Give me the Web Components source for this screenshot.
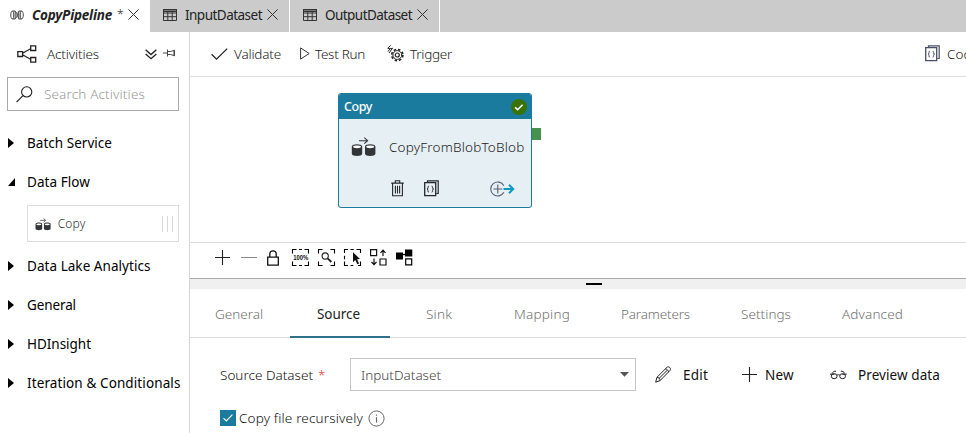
<!DOCTYPE html>
<html lang="en">
<head>
<meta charset="utf-8">
<title>CopyPipeline</title>
<style>
html,body{margin:0;height:100%;overflow:hidden;background:#fff}
body{font:300 13.5px/20px "Noto Sans","Open Sans",sans-serif;color:#222}
</style>
</head>
<body>
<pipeline-app></pipeline-app>
<script>
/* Text label with a set advance width: the letter spacing takes up the difference. */
class FitText extends HTMLElement{
  connectedCallback(){
    this.attachShadow({mode:'open'}).innerHTML=`<style>:host{display:block;flex:none;white-space:pre;line-height:20px}span{display:inline-block}</style><span><slot></slot></span>`;
    const w=+this.getAttribute('w'),s=this.shadowRoot.querySelector('span');
    if(w){
      this.style.width=w+'px';
      const n=this.textContent.length;
      s.style.letterSpacing=((w-s.getBoundingClientRect().width)/n).toFixed(3)+'px';
    }
  }
}

const corners='<path d="M.5 4.5v-4h4M7 .5h3M12.5.5h4v4M.5 12.5v4h4M7 16.5h3M12.5 16.5h4v-4" fill="none" stroke="#000" stroke-width="1.1"/>';
const sheet=c=>`<path d="M3.5 2.7V.8h10.7v12.7h-2" fill="none" stroke="${c}" stroke-width="1.2"/><path d="M.7 2.7h11v13H.7z" fill="none" stroke="${c}" stroke-width="1.3"/><path d="M5 6.2c-1.2 0-1 .7-1 1.6 0 .8-.2 1.2-1 1.3.8.1 1 .5 1 1.3 0 .9-.2 1.7 1 1.7M7.6 6.2c1.2 0 1 .7 1 1.6 0 .8.2 1.2 1 1.3-.8.1-1 .5-1 1.3 0 .9.2 1.7-1 1.7" fill="none" stroke="${c}" stroke-width="1"/>`;
const ICONS={
  pipe:[14,10,'<g fill="none" stroke="#333" stroke-width=".9"><path d="M2.6 1h2.6v8H2.6C.1 9 .1 1 2.6 1zM2.8 1c1.3 1 1.3 7 0 8M11.4 1H8.8v8h2.6c2.5 0 2.5-8 0-8zM11.2 1c-1.3 1-1.3 7 0 8M5.2 1.6c2.4.6 2.4 6.2 0 6.8M8.8 1.6C7.4 2.4 7.4 7.6 8.8 8.4"/></g>'],
  close:[11,11,'<path d="M.4.4l10.2 10.2M10.6.4L.4 10.6" stroke="#333" stroke-width="1" fill="none"/>'],
  table:[14,12,'<path d="M.5.5h13v11H.5zM.5 4h13M.5 7.7h13M4.8 3v8.5M9.2 3v8.5" fill="none" stroke="#333"/><path d="M0 0h14v3H0z" fill="#333"/><path d="M1 1.5h12" stroke="#999" stroke-width=".7"/>'],
  nodes:[20,18,'<path d="M6 8l8-4.5M6 10l8 4.5" stroke="#222" fill="none" stroke-width="1.1"/><g fill="#fff" stroke="#222" stroke-width="1.3"><path d="M.8 6.7h4.8v4.8H.8zM13.7.8h5v4.7h-5zM13.7 12.5h5v4.7h-5z"/></g>'],
  chevrons:[12,11,'<path d="M.6.8L6 5.5 11.4.8M.6 5L6 9.7 11.4 5" stroke="#222" stroke-width="1.35" fill="none"/>'],
  pin:[12,8,'<path d="M0 4h4.4M4.5.5v7M4.5 2.5h3l3.5-1v5l-3.5-1h-3M11.4.8v6.4" fill="none" stroke="#333" stroke-width=".9"/>'],
  search:[17,17,'<circle cx="10.7" cy="5.9" r="5.1" fill="none" stroke="#222" stroke-width="1.1"/><path d="M7 9.6L.5 16.2" stroke="#222" stroke-width="1.2"/>'],
  right:[6,10,'<path d="M0 0l6 5-6 5z" fill="#000"/>'],
  down:[7,8,'<path d="M7 0v8H0z" fill="#000"/>'],
  copy:[26,20,'<g fill="#333638"><path d="M.8 9.6v7.2c0 3 10.4 3 10.4 0V9.6c0-3.2-10.4-3.2-10.4 0zM14 9.6v7.2c0 3 10.4 3 10.4 0V9.6c0-3.2-10.4-3.2-10.4 0z"/></g><g fill="#fff"><ellipse cx="6" cy="9.8" rx="4" ry="1.4"/><ellipse cx="19.2" cy="9.8" rx="4" ry="1.4"/></g><path d="M8 3.7h8.5M13.3.7l3.3 3-3.3 3" fill="none" stroke="#333638" stroke-width="1.1"/>'],
  grip:[12,16,'<path d="M.5 0v16M5.5 0v16M10.5 0v16" stroke="#d8d8d8"/>'],
  check:[17,12,'<path d="M.6 6.2l4.9 5L16.2.6" fill="none" stroke="#222" stroke-width="1.3"/>'],
  play:[10,13,'<path d="M.6.9v11.2L9.2 6.5z" fill="none" stroke="#333"/>'],
  trigger:[17,17,'<path d="M3.7.3L.8 3.3l2.2.5L1 6.5M3 3.8l2.6-.6L2 8" fill="none" stroke="#222" stroke-width="1"/><circle cx="10.3" cy="10" r="5.6" fill="none" stroke="#222" stroke-width="1.6" stroke-dasharray="2.5 1.9"/><circle cx="10.3" cy="10" r="4.4" fill="none" stroke="#222"/><circle cx="10.3" cy="10" r="2" fill="none" stroke="#222" stroke-width="1.2"/>'],
  code:[15,17,sheet('#22282b')],
  code2:[15,17,sheet('#4b4f66')],
  trash:[13,17,'<path d="M4.3 2.7V.8h4.4v1.9M.2 3.1h12.6M1.6 3.5v12.3h9.8V3.5M4.4 5.8v7.8M6.5 5.8v7.8M8.6 5.8v7.8" fill="none" stroke="#22282b" stroke-width="1.1"/>'],
  next:[25,16,'<path d="M13.9 4.7A7 7 0 1 0 13.9 11.3" fill="none" stroke="#555d70" stroke-width="1.1"/><path d="M3.5 8h8.8M7.8 3.5v9" stroke="#555d70" stroke-width="1.1"/><path d="M13.5 8h9M19 3.8L23.2 8 19 12.2" fill="none" stroke="#0c9ac4" stroke-width="2"/>'],
  ok:[16,16,'<circle cx="8" cy="8" r="8" fill="#397306"/><path d="M4.1 8.3l2.5 2.4 5-5" fill="none" stroke="#fff" stroke-width="1.6"/>'],
  plus:[15,15,'<path d="M0 7.5h15M7.5 0v15" stroke="#222" stroke-width="1.1"/>'],
  minus:[16,3,'<path d="M0 1.5h16" stroke="#888"/>'],
  lock:[12,16,'<path d="M.7 7.2h10.6v8H.7zM2.8 7V3.7C2.8-.2 9.2-.2 9.2 3.7V7" fill="none" stroke="#111" stroke-width="1.3"/>'],
  zoom100:[17,17,corners+'<text x="1.2" y="11" textLength="15" lengthAdjust="spacingAndGlyphs" font-family="Liberation Sans" font-weight="700" font-size="7" fill="#111">100%</text>'],
  zoomfit:[17,17,'<path d="M.5 4.5v-4h4M12.5.5h4v4M.5 12.5v4h4M12.5 16.5h4v-4" fill="none" stroke="#000" stroke-width="1.1"/><circle cx="7.2" cy="7" r="3.1" fill="none" stroke="#222" stroke-width="1.1"/><path d="M9.6 9.3l3.8 3.7" stroke="#222" stroke-width="1.8"/>'],
  select:[17,17,'<path d="M.5 4V.5H4M6.5.5h3.3M12.5.5h4V4M.5 6.8v3.4M.5 12.6v3.9H4M6.5 16.5h2.8M16.5 12.6v3.9H14" fill="none" stroke="#000" stroke-width="1.1"/><path d="M9 3.2v10l2.3-2.1 2 4.1 1.8-.8-2-4.1 2.9-.3z" fill="#111"/>'],
  arrange:[17,17,'<g fill="none" stroke="#111" stroke-width="1.2"><path d="M.6.6h6v6h-6zM10 10h6v6h-6zM13 7V1.4M10.5 3.8L13 1.2l2.5 2.6M4 9.5v6M1.5 13L4 15.6 6.5 13"/></g>'],
  group:[17,17,'<path d="M0 3.5h7v7H0zM9 .5h7.3v7H9z"/><path d="M6.5 5.5H10" stroke="#000" stroke-width="1.3"/><path d="M9.7 9.9h6v6h-6z" fill="#fff" stroke="#000" stroke-width="1.2"/>'],
  caret:[9,5,'<path d="M0 0h9L4.5 4.8z" fill="#555"/>'],
  pencil:[17,17,'<path d="M.7 16.2l1.2-4.8L12 1.3c1.8-1.5 4.6 1 3 3.1L5.1 14.6zM1.9 11.4c1.6-.1 3.4 1.5 3.2 3.2M10.4 3c1.6 0 3.2 1.5 3.1 3.1M3.9 12.6L12 4.5" fill="none" stroke="#222" stroke-width="1"/>'],
  glasses:[17,10,'<g fill="none" stroke="#222" stroke-width="1"><ellipse cx="4.2" cy="6.2" rx="2.9" ry="2.5"/><ellipse cx="12.6" cy="6.2" rx="2.9" ry="2.5"/><path d="M0 4.2h4.5M12.3 4.2h4.4M6.9 5.2c.9-.7 2.1-.7 3 0M2 3.5C3 1.7 4.3 1 6 1.2M10.8 1.2c1.7-.2 3 .5 4 2.3"/></g>'],
  tick:[10,8,'<path d="M.5 4.2l2.8 2.7L9.4.7" fill="none" stroke="#fff" stroke-width="1.1"/>'],
  info:[17,17,'<circle cx="8.5" cy="8.5" r="7.6" fill="none" stroke="#666"/><path d="M8.5 7.2v5.4M8.5 4.4v1.4" stroke="#666" stroke-width="1.1"/>']
};
class UiIcon extends HTMLElement{
  connectedCallback(){
    const [w,h,body]=ICONS[this.getAttribute('name')],k=+this.getAttribute('scale')||1;
    this.attachShadow({mode:'open'}).innerHTML=`<style>:host{display:block;flex:none;width:${w*k}px;height:${h*k}px}svg{display:block;overflow:visible}</style><svg width="${w*k}" height="${h*k}" viewBox="0 0 ${w} ${h}" aria-hidden="true">${body}</svg>`;
  }
}

function define(name,html){
  const t=document.createElement('template');t.innerHTML=html;
  customElements.define(name,class extends HTMLElement{
    constructor(){super();this.attachShadow({mode:'open'}).append(t.content.cloneNode(true));}
  });
}

define('file-tab',`<style>
:host{display:flex;align-items:center;box-sizing:border-box;flex:none;height:32px;padding-bottom:3px;background:#cbcbcb;border-right:1px solid #fff;color:#222;font-weight:400}
:host([active]){background:#fff;border:0}
</style><slot></slot>`);

define('tab-strip',`<style>
:host{display:flex;height:32px;background:#cbcbcb}
b{font-style:italic;font-weight:700}
</style>
<file-tab active style="width:150px"><ui-icon name="pipe" style="margin:0 8px 0 10px"></ui-icon><b><fit-text w="80" style="font-size:13.5px">CopyPipeline</fit-text></b><fit-text w="7" style="margin:0 4px 0 5px;font-size:12px;font-weight:300">*</fit-text><ui-icon name="close"></ui-icon></file-tab>
<file-tab style="width:140px"><ui-icon name="table" style="margin:0 8px 0 13px"></ui-icon><fit-text w="77">InputDataset</fit-text><ui-icon name="close" style="margin-left:5px"></ui-icon></file-tab>
<file-tab style="width:150px"><ui-icon name="table" style="margin:0 8px 0 13px"></ui-icon><fit-text w="87">OutputDataset</fit-text><ui-icon name="close" style="margin-left:5px"></ui-icon></file-tab>`);

define('tree-row',`<style>
:host{display:flex;align-items:center;height:39px;padding-left:8px;color:#000;font-weight:400}
::slotted(ui-icon){margin-right:13px;margin-top:-1px}
:host([open]) ::slotted(ui-icon){margin-right:12px}
</style><slot></slot>`);

define('activity-item',`<style>
:host{display:flex;align-items:center;box-sizing:border-box;width:152px;height:37px;margin:3.5px 0 4.5px 27px;padding:1px 4px 0 7px;border:1px solid #ddd;color:#333;font-size:12px}
ui-icon[name=grip]{margin-left:auto}
fit-text{margin-left:6px}
</style><ui-icon name="copy" scale=".64"></ui-icon><fit-text w="28">Copy</fit-text><ui-icon name="grip"></ui-icon>`);

define('activity-panel',`<style>
:host{display:block;box-sizing:border-box;width:190px;flex:none;border-right:1px solid #d4d4d4}
.head{display:flex;align-items:center;height:44px;padding-left:17px;box-sizing:border-box}
.find{display:flex;align-items:center;box-sizing:border-box;width:172px;height:34px;margin:1px 0 12.5px 7px;padding-left:8px;border:1px solid #aaa;color:#999}
</style>
<div class="head"><ui-icon name="nodes"></ui-icon><fit-text w="52" style="margin:0 46px 0 10px">Activities</fit-text><ui-icon name="chevrons"></ui-icon><ui-icon name="pin" style="margin:-3px 0 0 6px"></ui-icon></div>
<div class="find"><ui-icon name="search"></ui-icon><fit-text w="101" style="margin-left:11px">Search Activities</fit-text></div>
<tree-row><ui-icon name="right"></ui-icon><fit-text w="85">Batch Service</fit-text></tree-row>
<tree-row open><ui-icon name="down"></ui-icon><fit-text w="63">Data Flow</fit-text></tree-row>
<activity-item></activity-item>
<tree-row><ui-icon name="right"></ui-icon><fit-text w="123.5">Data Lake Analytics</fit-text></tree-row>
<tree-row><ui-icon name="right"></ui-icon><fit-text w="49">General</fit-text></tree-row>
<tree-row><ui-icon name="right"></ui-icon><fit-text w="64">HDInsight</fit-text></tree-row>
<tree-row><ui-icon name="right"></ui-icon><fit-text w="153.5">Iteration &amp; Conditionals</fit-text></tree-row>`);

define('command-bar',`<style>
:host{display:flex;align-items:center;box-sizing:border-box;height:45px;padding-left:21px;border-bottom:1px solid #ddd;overflow:hidden}
</style>
<ui-icon name="check"></ui-icon><fit-text w="47" style="margin-left:6px">Validate</fit-text>
<ui-icon name="play" style="margin-left:19px;margin-top:-1px"></ui-icon><fit-text w="50" style="margin-left:5px">Test Run</fit-text>
<ui-icon name="trigger" style="margin-left:22px;margin-top:-2px"></ui-icon><fit-text w="42" style="margin-left:6px">Trigger</fit-text>
<ui-icon name="code2" style="margin-left:473px;margin-top:-2px"></ui-icon><fit-text w="32" style="margin-left:7px">Code</fit-text>`);

define('activity-card',`<style>
:host{display:flex;flex-direction:column;box-sizing:border-box;width:194px;height:115px;border:1px solid #1b7b9e;border-radius:3px;background:#e6f0f4;overflow:hidden;color:#222}
.head{display:flex;align-items:center;justify-content:space-between;height:25px;padding:0 4px 0 5px;background:#1b7b9e;color:#fff;font-weight:500;font-size:12.5px}
.body{display:flex;align-items:center;height:56px;padding-left:12px}
.foot{display:flex;align-items:center;height:27px;padding-left:52px}
</style>
<div class="head"><fit-text w="28">Copy</fit-text><ui-icon name="ok"></ui-icon></div>
<div class="body"><ui-icon name="copy"></ui-icon><fit-text w="135.5" style="margin-left:12px">CopyFromBlobToBlob</fit-text></div>
<div class="foot"><ui-icon name="trash"></ui-icon><ui-icon name="code" style="margin-left:20px"></ui-icon><ui-icon name="next" style="margin-left:51px"></ui-icon></div>`);

define('pipeline-canvas',`<style>
:host{display:block;position:relative;height:165px;border-bottom:1px solid #ddd}
activity-card{position:absolute;left:148px;top:16px}
i{position:absolute;left:342px;top:51px;width:9px;height:12px;background:#479150}
</style><activity-card></activity-card><i></i>`);

define('canvas-tools',`<style>
:host{display:flex;align-items:center;height:29px;padding:0 0 6px 25px}
</style>
<ui-icon name="plus"></ui-icon><ui-icon name="minus" style="margin-left:11px"></ui-icon><ui-icon name="lock" style="margin-left:10px"></ui-icon>
<ui-icon name="zoom100" style="margin-left:13px"></ui-icon><ui-icon name="zoomfit" style="margin-left:9px"></ui-icon><ui-icon name="select" style="margin-left:9px"></ui-icon><ui-icon name="arrange" style="margin-left:9px"></ui-icon><ui-icon name="group" style="margin-left:9px"></ui-icon>`);

define('pane-splitter',`<style>
:host{display:flex;box-sizing:border-box;height:11px;border-top:1px solid #aaa;background:#f0f0f0;padding:4px 0 0 396px}
i{width:16px;height:2px;background:#000}
</style><i></i>`);

define('detail-tab',`<style>
:host{display:flex;box-sizing:border-box;flex:none;height:49px;padding-top:15px;color:#707070}
:host([active]){color:#222;font-weight:400;border-bottom:2px solid #2f7188}
</style><slot></slot>`);

define('detail-tabs',`<style>:host{display:flex;box-sizing:border-box;height:49px;box-shadow:inset 0 -1px #ddd}</style>
<detail-tab style="width:100px;padding-left:25px"><fit-text w="48">General</fit-text></detail-tab>
<detail-tab active style="width:100px;padding-left:27px"><fit-text w="43">Source</fit-text></detail-tab>
<detail-tab style="width:97px;padding-left:36px"><fit-text w="26">Sink</fit-text></detail-tab>
<detail-tab style="width:107px;padding-left:27px"><fit-text w="56">Mapping</fit-text></detail-tab>
<detail-tab style="width:123px;padding-left:27px"><fit-text w="69">Parameters</fit-text></detail-tab>
<detail-tab style="width:98px;padding-left:24px"><fit-text w="50">Settings</fit-text></detail-tab>
<detail-tab style="width:115px;padding-left:27px"><fit-text w="61">Advanced</fit-text></detail-tab>`);

define('source-form',`<style>
:host{display:block;padding:20px 0 0 30px;color:#111}
.row{display:flex;align-items:center;height:33px}
.select{display:flex;align-items:center;justify-content:space-between;box-sizing:border-box;width:286px;height:33px;margin-left:26px;padding:0 6px 0 10px;border:1px solid #c6c6c6;color:#444}
.cmd{font-weight:400}
.opt{display:flex;align-items:center;height:20px;margin-top:17px}
.box{display:flex;align-items:center;justify-content:center;width:16px;height:16px;background:#1b7b9e}
</style>
<div class="row"><fit-text w="93">Source Dataset</fit-text><fit-text w="6" style="margin-left:5px;color:#e33">*</fit-text>
<div class="select"><fit-text w="80">InputDataset</fit-text><ui-icon name="caret"></ui-icon></div>
<ui-icon name="pencil" style="margin-left:19px"></ui-icon><fit-text class="cmd" w="25" style="margin-left:11px">Edit</fit-text>
<ui-icon name="plus" style="margin-left:34px"></ui-icon><fit-text class="cmd" w="29" style="margin-left:8px">New</fit-text>
<ui-icon name="glasses" style="margin-left:36px"></ui-icon><fit-text class="cmd" w="82" style="margin-left:11px">Preview data</fit-text></div>
<div class="opt"><div class="box"><ui-icon name="tick"></ui-icon></div><fit-text w="124" style="margin:0 5px 0 3px">Copy file recursively</fit-text><ui-icon name="info"></ui-icon></div>`);

define('pipeline-app',`<style>
:host{display:flex;flex-direction:column;height:433px;width:966px;overflow:hidden}
.main{display:flex;flex:1}
.work{flex:1;min-width:0}
</style>
<tab-strip></tab-strip>
<div class="main"><activity-panel></activity-panel>
<div class="work"><command-bar></command-bar><pipeline-canvas></pipeline-canvas><canvas-tools></canvas-tools><pane-splitter></pane-splitter><detail-tabs></detail-tabs><source-form></source-form></div></div>`);

customElements.define('ui-icon',UiIcon);
customElements.define('fit-text',FitText);
</script>
</body>
</html>
